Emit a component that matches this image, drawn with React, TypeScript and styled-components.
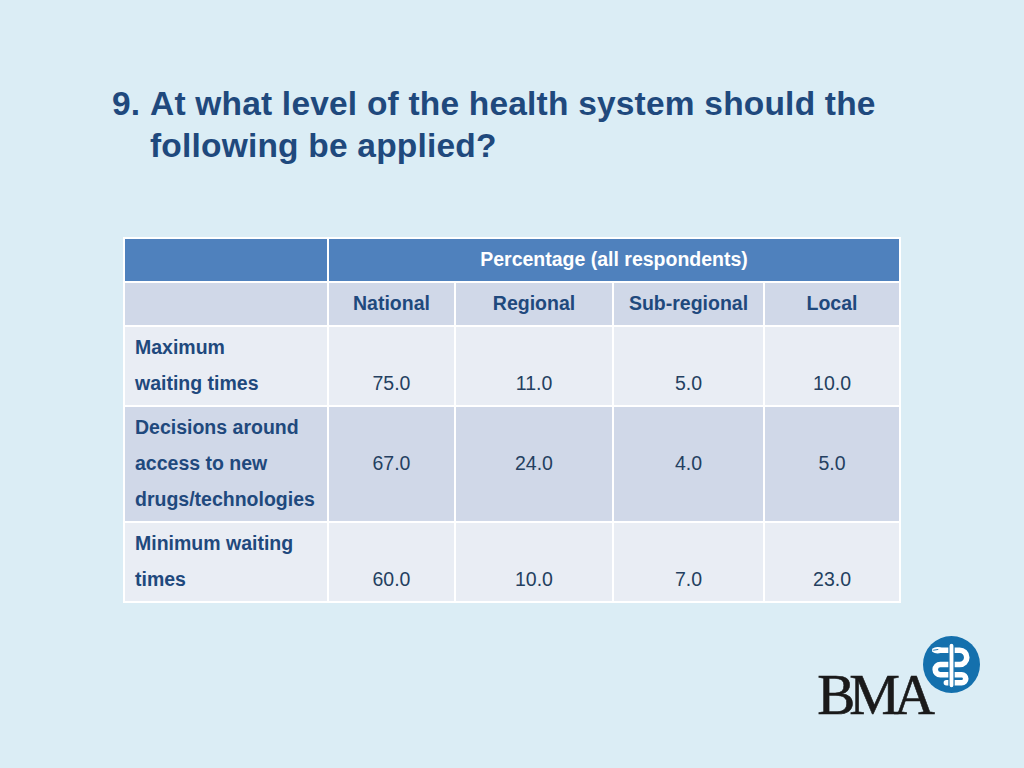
import styled, { createGlobalStyle } from 'styled-components'

type Shade = 'dark' | 'light'

type Row = {
	label: string[]
	values: string[]
	shade: Shade
}

const rows: Row[] = [
	{ label: ['Maximum', 'waiting times'], values: ['75.0', '11.0', '5.0', '10.0'], shade: 'light' },
	{
		label: ['Decisions around', 'access to new', 'drugs/technologies'],
		values: ['67.0', '24.0', '4.0', '5.0'],
		shade: 'dark',
	},
	{ label: ['Minimum waiting', 'times'], values: ['60.0', '10.0', '7.0', '23.0'], shade: 'light' },
]

const levels = ['National', 'Regional', 'Sub-regional', 'Local']
const colWidths = [204, 127, 158, 151, 136]

const GlobalStyle = createGlobalStyle`
	html, body {
		margin: 0;
		padding: 0;
		background: #dbedf5;
	}
`

const Slide = styled.div`
	width: 1024px;
	height: 768px;
	display: flex;
	flex-direction: column;
	background: #dbedf5;
	font-family: 'Liberation Sans', Arial, sans-serif;
	overflow: hidden;
`

const Title = styled.h1`
	display: flex;
	margin: 83px 0 0 112px;
	font-size: 33.5px;
	line-height: 42px;
	font-weight: 700;
	color: #1f497d;
	letter-spacing: 0.2px;
`

const TitleNumber = styled.span`
	flex: 0 0 38px;
`

const TitleText = styled.span`
	width: 750px;
`

const Table = styled.table`
	margin: 70px 0 0 123px;
	border-collapse: collapse;
	table-layout: fixed;
	width: 778px;
	font-size: 19.5px;
	line-height: 36px;
`

const HeadCell = styled.th<{ $variant: 'blue' | 'band' }>`
	padding: 2px 8px 4px;
	border: 2px solid #ffffff;
	text-align: center;
	font-weight: 700;
	background: ${p => (p.$variant === 'blue' ? '#4f81bd' : '#d0d8e8')};
	color: ${p => (p.$variant === 'blue' ? '#ffffff' : '#1f497d')};
`

const LabelCell = styled.td<{ $shade: Shade }>`
	padding: 2px 8px 4px 10px;
	border: 2px solid #ffffff;
	vertical-align: top;
	font-weight: 700;
	color: #1f497d;
	background: ${p => (p.$shade === 'dark' ? '#d0d8e8' : '#e9edf4')};
	white-space: nowrap;
`

const NumCell = styled.td<{ $shade: Shade }>`
	padding: 38px 8px 4px;
	border: 2px solid #ffffff;
	vertical-align: top;
	text-align: center;
	color: #243f60;
	background: ${p => (p.$shade === 'dark' ? '#d0d8e8' : '#e9edf4')};
`

const LabelLine = styled.div``

const Footer = styled.div`
	display: flex;
	justify-content: flex-end;
	align-items: flex-start;
	margin-top: 33px;
	padding-right: 44px;
`

const Wordmark = styled.span`
	margin-top: 31px;
	font-family: 'Liberation Serif', 'Times New Roman', serif;
	font-size: 57px;
	line-height: 56px;
	letter-spacing: -6px;
	color: #1a1a1a;
	-webkit-text-stroke: 0.6px #1a1a1a;
`

const Emblem = styled.svg`
	margin-left: -6px;
	width: 57px;
	height: 57px;
`

function BmaEmblem() {
	return (
		<Emblem viewBox='0 0 56 56'>
			<circle cx='28' cy='28' r='28' fill='#1470ad' />
			<path
				d='M15 14 H36 A7 7 0 0 1 36 28 H17 A5 5 0 0 0 17 38 H38 A4 4 0 0 1 38 46 H23'
				fill='none'
				stroke='#ffffff'
				strokeWidth='5.5'
				strokeLinecap='round'
			/>
			<path d='M9 12.5 Q13 9.5 18 11.5 L18 16.5 Q13 18.5 9 15.5 Z' fill='#ffffff' />
			<line x1='10' y1='14' x2='15' y2='13.2' stroke='#1470ad' strokeWidth='0.9' />
			<rect x='25.5' y='7' width='5' height='44' rx='2.5' fill='#ffffff' stroke='#1470ad' strokeWidth='1.2' />
		</Emblem>
	)
}

function App() {
	return (
		<>
			<GlobalStyle />
			<Slide>
				<Title>
					<TitleNumber>9.</TitleNumber>
					<TitleText>At what level of the health system should the following be applied?</TitleText>
				</Title>
				<Table>
					<colgroup>
						{colWidths.map((w, i) => (
							<col key={i} style={{ width: w }} />
						))}
					</colgroup>
					<thead>
						<tr>
							<HeadCell $variant='blue' />
							<HeadCell $variant='blue' colSpan={4}>
								Percentage (all respondents)
							</HeadCell>
						</tr>
						<tr>
							<HeadCell $variant='band' />
							{levels.map(level => (
								<HeadCell key={level} $variant='band'>
									{level}
								</HeadCell>
							))}
						</tr>
					</thead>
					<tbody>
						{rows.map(row => (
							<tr key={row.label.join(' ')}>
								<LabelCell $shade={row.shade}>
									{row.label.map(line => (
										<LabelLine key={line}>{line}</LabelLine>
									))}
								</LabelCell>
								{row.values.map((v, i) => (
									<NumCell key={i} $shade={row.shade}>
										{v}
									</NumCell>
								))}
							</tr>
						))}
					</tbody>
				</Table>
				<Footer>
					<Wordmark>BMA</Wordmark>
					<BmaEmblem />
				</Footer>
			</Slide>
		</>
	)
}

export default App
